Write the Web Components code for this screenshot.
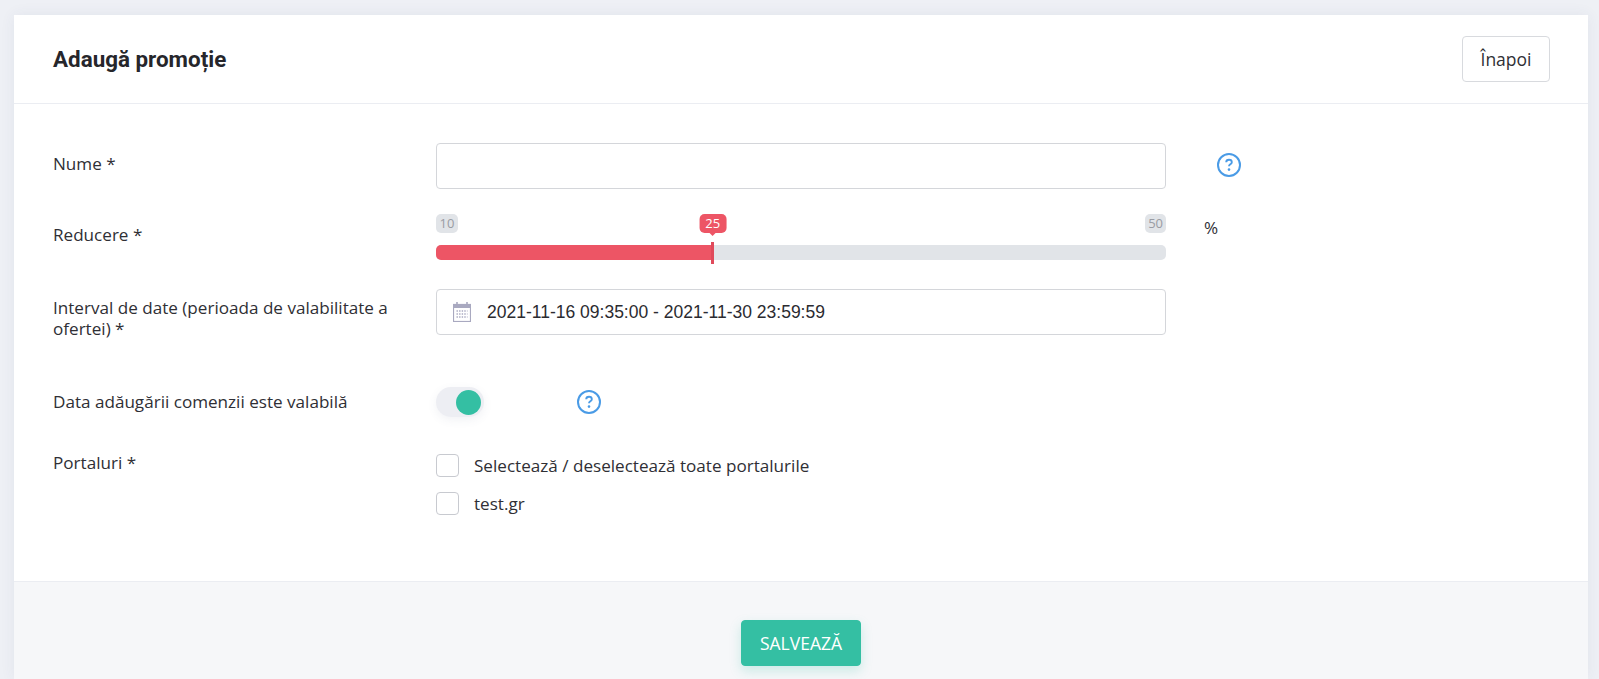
<!DOCTYPE html>
<html lang="ro">
<head>
<meta charset="utf-8">
<title>Adaugă promoție</title>
<style>
  html, body { height: 100%; }
  body {
    margin: 0;
    overflow: hidden;
    background: #eef0f5;
    color: #2f2f35;
    font: 17.1px/21px "Open Sans", sans-serif;
  }
</style>
</head>
<body>
<promo-card>
  <span slot="title">Adaugă promoție</span>
  <app-button slot="action">Înapoi</app-button>

  <form-row label="Nume *" pad="10">
    <text-field></text-field>
    <help-icon slot="after" style="margin:10px 0 0 51px"></help-icon>
  </form-row>

  <form-row label="Reducere *" pad="10" gap="25">
    <range-slider min="10" max="50" value="25"></range-slider>
    <span slot="after" style="display:block;margin:3px 0 0 38px">%</span>
  </form-row>

  <form-row label="Interval de date (perioada de valabilitate a ofertei) *" pad="8" gap="48">
    <date-field>2021-11-16 09:35:00 - 2021-11-30 23:59:59</date-field>
  </form-row>

  <form-row label="Data adăugării comenzii este valabilă" pad="4" gap="37">
    <div style="display:flex;align-items:center;gap:93px">
      <toggle-switch></toggle-switch>
      <help-icon></help-icon>
    </div>
  </form-row>

  <form-row label="Portaluri *" pad="-2" gap="0">
    <check-box>Selectează / deselectează toate portalurile</check-box>
    <check-box style="margin-top:15px">test.gr</check-box>
  </form-row>

  <app-button slot="footer" primary>SALVEAZĂ</app-button>
</promo-card>

<script>
class PromoCard extends HTMLElement {
  constructor() {
    super();
    this.attachShadow({ mode: 'open' });
    this.shadowRoot.innerHTML = `
      <style>
        :host {
          display: block;
          margin: 15px 11px 0 14px;
          background: #fff;
          box-shadow: 0 0 14px rgba(60,70,110,0.07);
        }
        header {
          display: flex;
          justify-content: space-between;
          align-items: center;
          height: 88px;
          padding: 0 38px 0 39px;
          border-bottom: 1px solid #ebedf2;
        }
        h2 {
          margin: 0;
          font: 700 22.4px/30px Roboto, sans-serif;
          color: #26262b;
        }
        main { padding: 39px 39px 66px; }
        footer {
          display: flex;
          justify-content: center;
          padding: 38px 0 13px;
          background: #f6f7f9;
          border-top: 1px solid #ebedf2;
        }
      </style>
      <header>
        <h2><slot name="title"></slot></h2>
        <slot name="action"></slot>
      </header>
      <main><slot></slot></main>
      <footer><slot name="footer"></slot></footer>
    `;
  }
}

class FormRow extends HTMLElement {
  constructor() {
    super();
    this.attachShadow({ mode: 'open' });
  }

  connectedCallback() {
    const label = this.getAttribute('label');
    const pad = this.getAttribute('pad') || 0;
    const gap = this.getAttribute('gap') || 25;
    this.shadowRoot.innerHTML = `
      <style>
        :host {
          display: grid;
          grid-template-columns: 383px 730px 1fr;
          margin-bottom: ${gap}px;
        }
        label {
          display: block;
          margin-top: ${pad}px;
          padding-right: 20px;
        }
      </style>
      <label>${label}</label>
      <div><slot></slot></div>
      <div><slot name="after"></slot></div>
    `;
  }
}

class TextField extends HTMLElement {
  constructor() {
    super();
    this.attachShadow({ mode: 'open' });
    this.shadowRoot.innerHTML = `
      <style>
        :host { display: block; }
        input {
          display: block;
          box-sizing: border-box;
          width: 100%;
          height: 46px;
          padding: 0 14px;
          border: 1px solid #d4d6da;
          border-radius: 4px;
          outline: none;
          background: #fff;
        }
      </style>
      <input type="text">
    `;
  }
}

class DateField extends HTMLElement {
  constructor() {
    super();
    this.attachShadow({ mode: 'open' });
    this.shadowRoot.innerHTML = `
      <style>
        :host {
          display: flex;
          align-items: center;
          box-sizing: border-box;
          height: 46px;
          padding: 0 16px;
          gap: 16px;
          border: 1px solid #d4d6da;
          border-radius: 4px;
          font: 17.5px/24px "Liberation Sans", sans-serif;
          color: #2b2b30;
        }
        svg { flex: none; }
      </style>
      <svg width="18" height="20" viewBox="0 0 18 20" fill="none" stroke="#a9a9c0">
        <rect x="0.5" y="2.5" width="17" height="17" stroke-width="1.2"/>
        <rect x="0" y="2" width="18" height="4" fill="#a9a9c0" stroke="none"/>
        <path d="M4 0v3M14 0v3" stroke-width="1.6"/>
        <path d="M3.5 9h11M3.5 12h11M3.5 15h11" stroke-width="1.4" stroke-dasharray="1.4 1.2"/>
      </svg>
      <span><slot></slot></span>
    `;
  }
}

class RangeSlider extends HTMLElement {
  constructor() {
    super();
    this.attachShadow({ mode: 'open' });
  }

  connectedCallback() {
    const min = +this.getAttribute('min');
    const max = +this.getAttribute('max');
    const value = +this.getAttribute('value');
    const percent = (value - min) / (max - min) * 100 * 1.011;
    this.shadowRoot.innerHTML = `
      <style>
        :host {
          display: block;
          position: relative;
          height: 50px;
          font: 13px/19px "Open Sans", sans-serif;
        }
        .edge {
          position: absolute;
          top: 0;
          padding: 0 3px;
          height: 19px;
          border-radius: 5px;
          background: #e1e4e8;
          color: #9a9ca3;
        }
        .min { left: 0; padding: 0 3.5px; }
        .max { right: 0; }
        .track {
          position: absolute;
          left: 0;
          right: 0;
          top: 31px;
          height: 15px;
          border-radius: 5px;
          background: #e1e4e8;
          overflow: hidden;
        }
        .fill { height: 100%; width: ${percent}%; background: #ed5565; }
        .handle {
          position: absolute;
          left: ${percent}%;
          top: 28px;
          width: 3px;
          height: 22px;
          margin-left: -1.5px;
          background: #e04a5b;
        }
        .current {
          position: absolute;
          left: ${percent}%;
          top: 0;
          transform: translateX(-50%);
          padding: 0 6px;
          height: 19px;
          border-radius: 5px;
          background: #ed5565;
          color: #fff;
        }
        .current::after {
          content: "";
          position: absolute;
          left: 50%;
          bottom: -3px;
          margin-left: -3px;
          border: 3px solid transparent;
          border-bottom: 0;
          border-top-color: #ed5565;
        }
      </style>
      <span class="edge min">${min}</span>
      <span class="edge max">${max}</span>
      <div class="track"><div class="fill"></div></div>
      <div class="handle"></div>
      <span class="current">${value}</span>
    `;
  }
}

class ToggleSwitch extends HTMLElement {
  constructor() {
    super();
    this.attachShadow({ mode: 'open' });
    this.shadowRoot.innerHTML = `
      <style>
        :host {
          display: flex;
          justify-content: flex-end;
          align-items: center;
          box-sizing: border-box;
          width: 48px;
          height: 30px;
          padding-right: 3px;
          border-radius: 15px;
          background: #edeef3;
          box-shadow: 0 3px 10px rgba(80,90,130,0.08);
        }
        i { display: block; width: 25px; height: 25px; border-radius: 50%; background: #34bfa3; }
      </style>
      <i></i>
    `;
  }
}

class HelpIcon extends HTMLElement {
  constructor() {
    super();
    this.attachShadow({ mode: 'open' });
    this.shadowRoot.innerHTML = `
      <style>
        :host { display: block; width: 24px; height: 24px; }
        svg { display: block; }
      </style>
      <svg width="24" height="24" viewBox="0 0 24 24" fill="none">
        <circle cx="12" cy="12" r="11" stroke="#4a9be6" stroke-width="2"/>
        <path d="M9.2 9.3c0-1.6 1.2-2.5 2.8-2.5s2.8 .9 2.8 2.4c0 2.1-2.8 2.1-2.8 4" stroke="#4a9be6" stroke-width="1.9"/>
        <circle cx="12" cy="16.6" r="1.3" fill="#4a9be6"/>
      </svg>
    `;
  }
}

class CheckBox extends HTMLElement {
  constructor() {
    super();
    this.attachShadow({ mode: 'open' });
    this.shadowRoot.innerHTML = `
      <style>
        :host { display: flex; align-items: center; gap: 15px; height: 23px; }
        i {
          flex: none;
          box-sizing: border-box;
          width: 23px;
          height: 23px;
          border: 1px solid #c8cad0;
          border-radius: 4px;
          background: #fff;
        }
      </style>
      <i></i>
      <span><slot></slot></span>
    `;
  }
}

class AppButton extends HTMLElement {
  constructor() {
    super();
    this.attachShadow({ mode: 'open' });
    this.shadowRoot.innerHTML = `
      <style>
        :host {
          display: inline-flex;
          align-items: center;
          justify-content: center;
          box-sizing: border-box;
          height: 46px;
          padding: 0 17.5px;
          border: 1px solid #d8dade;
          border-radius: 4px;
          background: #fff;
          color: #2f2f35;
          font: 17.5px/24px "Open Sans", sans-serif;
        }
        :host([primary]) {
          padding: 0 18px;
          border-color: #34bfa3;
          background: #34bfa3;
          color: #fff;
          box-shadow: 0 5px 12px rgba(52,191,163,0.22);
        }
      </style>
      <slot></slot>
    `;
  }
}

customElements.define('promo-card', PromoCard);
customElements.define('form-row', FormRow);
customElements.define('text-field', TextField);
customElements.define('date-field', DateField);
customElements.define('range-slider', RangeSlider);
customElements.define('toggle-switch', ToggleSwitch);
customElements.define('help-icon', HelpIcon);
customElements.define('check-box', CheckBox);
customElements.define('app-button', AppButton);
</script>
</body>
</html>
